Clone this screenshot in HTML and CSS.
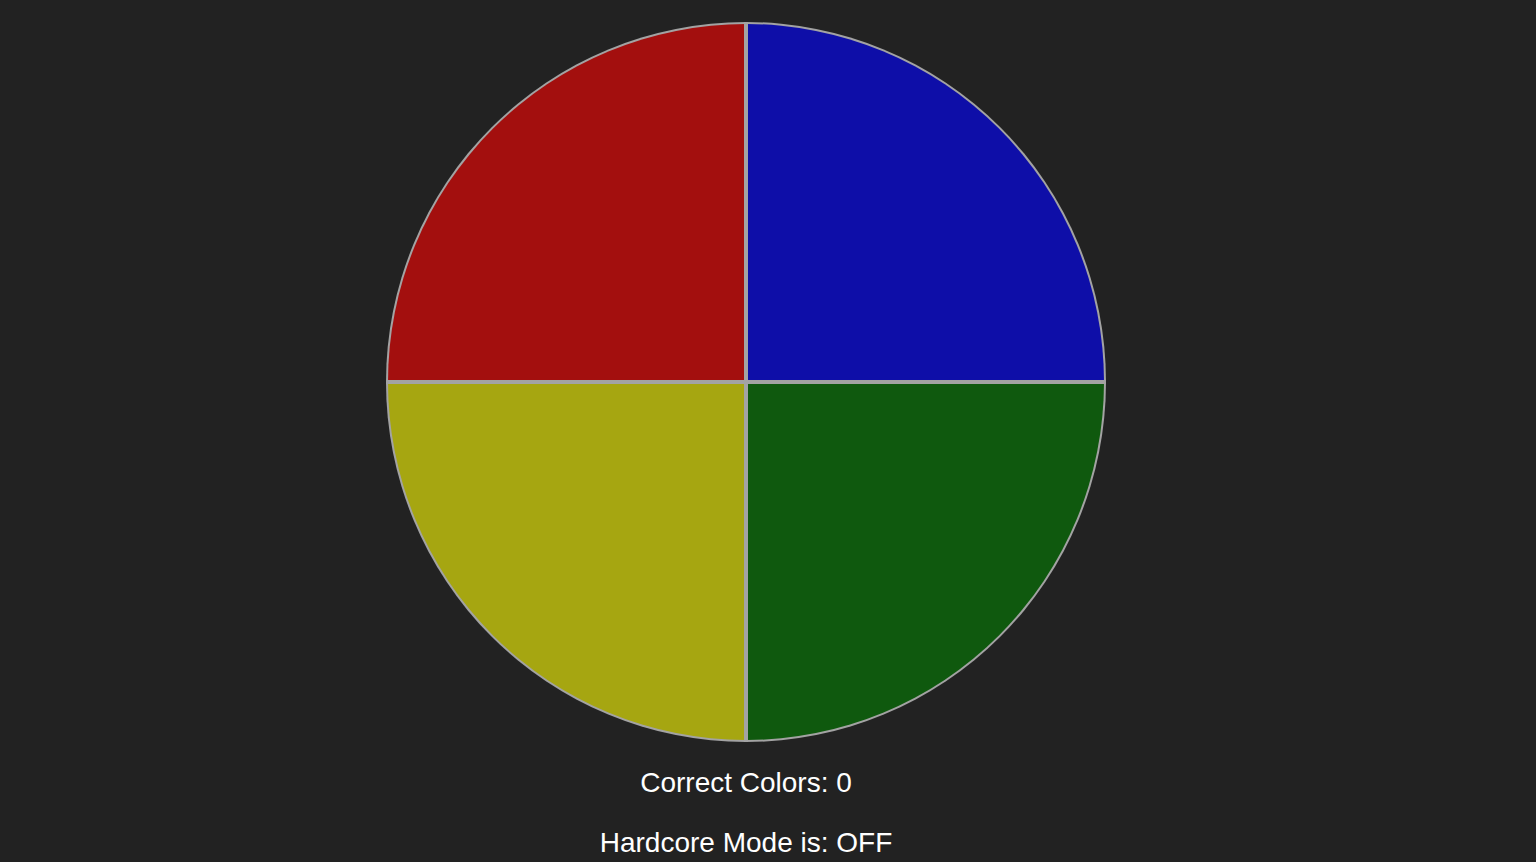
FILE: index.html
```html
<!DOCTYPE html>
<html lang="en">
<head>
  <meta charset="UTF-8">
  <title>Simon Colors</title>
  <meta name="viewport" content="width=device-width, initial-scale=1.0">
  <link rel="stylesheet" href="styles.css">
</head>
<body>
  <div class="game">
    <!-- Color board -->
    <div class="board">
      <div class="pad red" id="red"></div>
      <div class="pad blue" id="blue"></div>
      <div class="pad yellow" id="yellow"></div>
      <div class="pad green" id="green"></div>
    </div>

    <!-- Status -->
    <p class="status">Correct Colors: <span id="score">0</span></p>
    <p class="status">Hardcore Mode is: <span id="mode">OFF</span></p>
  </div>
</body>
</html>
```

FILE: styles.css
```css
/* Basic styling */
body {
  margin: 0;
  background-color: #222222;
  font-family: "Liberation Sans", Arial, sans-serif;
  color: #ffffff;
}
.game {
  width: 720px;
  margin-left: 386px;
  padding-top: 22px;
}
.board {
  display: grid;
  grid-template-columns: 360px 360px;
  grid-template-rows: 360px 360px;
}
.pad {
  box-sizing: border-box;
  border: 2px solid #a3a3a3;
}
.red {
  background-color: #a30f0e;
  border-top-left-radius: 360px;
}
.blue {
  background-color: #0e0ea8;
  border-top-right-radius: 360px;
}
.yellow {
  background-color: #a6a611;
  border-bottom-left-radius: 360px;
}
.green {
  background-color: #0f590e;
  border-bottom-right-radius: 360px;
}
.status {
  text-align: center;
  font-size: 28px;
  margin: 25px 0 0;
}
.status + .status {
  margin-top: 28px;
}
```
